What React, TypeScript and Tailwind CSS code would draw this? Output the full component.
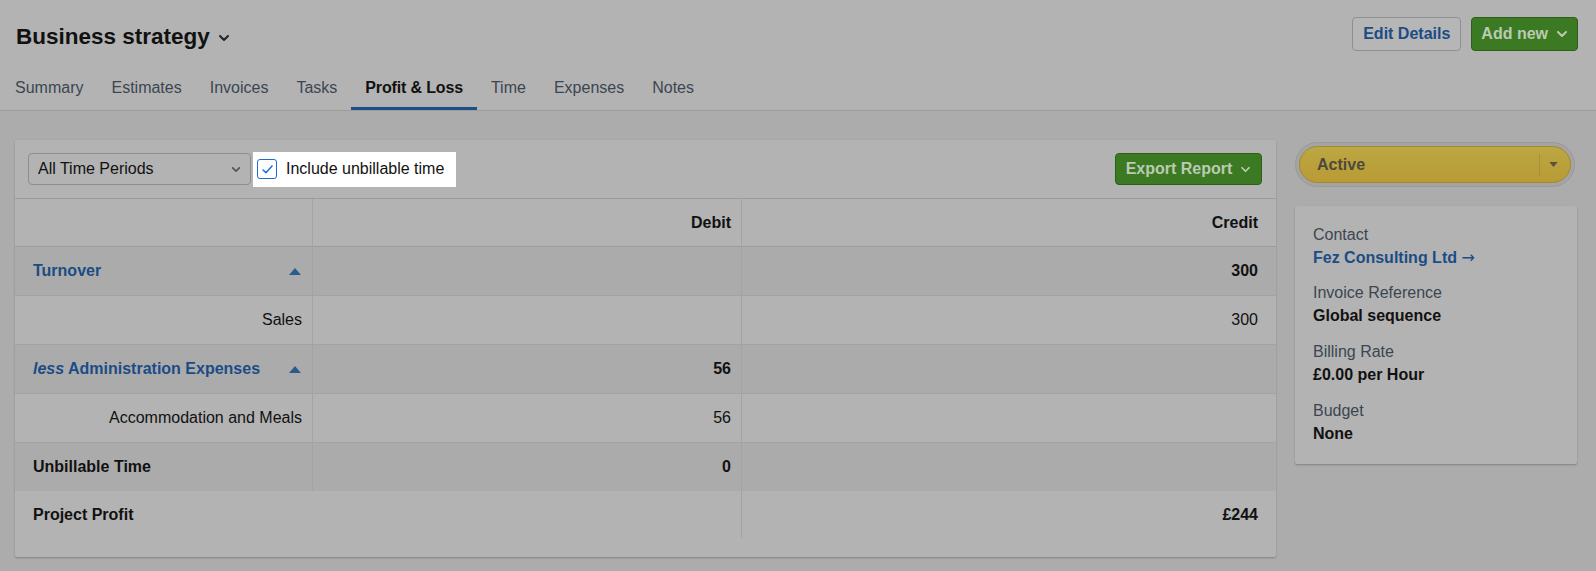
import React from "react";

const font = { fontFamily: '"Liberation Sans", Arial, sans-serif' };

function Chevron({ className = "" }: { className?: string }) {
  return (
    <svg viewBox="0 0 12 8" className={className} fill="none" stroke="currentColor" strokeWidth="2" strokeLinecap="round" strokeLinejoin="round">
      <path d="M2 2l4 4 4-4" />
    </svg>
  );
}

function Up() {
  return (
    <svg viewBox="0 0 12 8" className="w-[12px] h-[8px]" fill="#2a5c8e">
      <path d="M0 8L6 1l6 7z" />
    </svg>
  );
}

export default function App() {
  const tabs = ["Summary", "Estimates", "Invoices", "Tasks", "Profit & Loss", "Time", "Expenses", "Notes"];
  return (
    <div style={font} className="w-[1596px] h-[571px] bg-[#acacac] text-[#111] overflow-hidden">
      {/* header */}
      <div className="bg-[#b3b3b3] border-b border-[#9c9c9c] h-[111px] flex flex-col">
        <div className="flex items-start justify-between pl-[16px] pr-[18px] pt-[17px] h-[68px]">
          <div className="flex items-center gap-[8px] h-[38px] mt-[1px]">
            <span className="text-[22.5px] font-bold text-[#111]">Business strategy</span>
            <Chevron className="w-[12px] h-[8px] text-[#222] mt-[2px]" />
          </div>
          <div className="flex gap-[10px]">
            <button className="h-[34px] px-[10px] rounded-[4px] border border-[#8d9194] bg-[#b6b6b6] text-[#1c4c85] text-[16px] font-bold">Edit Details</button>
            <button className="h-[34px] px-[9px] rounded-[4px] border border-[#2d5e1a] bg-[#3b7a22] text-[#bccab4] text-[16px] font-bold flex items-center gap-[8px]">
              Add new <Chevron className="w-[12px] h-[8px]" />
            </button>
          </div>
        </div>
        <div className="flex items-end h-[42px] pl-[1px]">
          {tabs.map((t) => {
            const active = t === "Profit & Loss";
            return (
              <div
                key={t}
                className={
                  "h-[42px] flex items-start pt-[8px] text-[16px] px-[14px] " +
                  (active ? "font-bold text-[#111] border-b-[3px] border-[#1b4f87] tracking-[-0.15px]" : "text-[#3b4651]")
                }
              >
                {t}
              </div>
            );
          })}
        </div>
      </div>

      <div className="flex items-start pl-[15px] pt-[29px] gap-[19px]">
        {/* main card */}
        <div className="w-[1261px] h-[417px] bg-[#b3b3b3] rounded-[2px] shadow-[0_1px_2px_rgba(0,0,0,0.25)] flex flex-col">
          <div className="flex items-center justify-between h-[58px] pl-[13px] pr-[14px]">
            <div className="flex items-center gap-[2px]">
              <div className="w-[223px] h-[32px] rounded-[4px] border border-[#8e8e8e] bg-[#b3b3b3] flex items-center justify-between pl-[9px] pr-[9px] text-[16px] text-[#111]">
                <span>All Time Periods</span>
                <Chevron className="w-[10px] h-[7px] text-[#555]" />
              </div>
              <div className="bg-white h-[35px] w-[203px] flex items-center pl-[4px] gap-[9px]">
                <div className="w-[20px] h-[20px] rounded-[3px] border border-[#1a6fd1] flex items-center justify-center">
                  <svg viewBox="0 0 12 10" className="w-[11px] h-[9px]" fill="none" stroke="#1a6fd1" strokeWidth="1.6" strokeLinecap="round" strokeLinejoin="round">
                    <path d="M1 5.5l3.3 3L11 1" />
                  </svg>
                </div>
                <span className="text-[16px] text-[#111]">Include unbillable time</span>
              </div>
            </div>
            <button className="w-[147px] h-[32px] rounded-[4px] border border-[#2d5e1a] bg-[#3b7a22] text-[#bccab4] text-[16px] font-bold flex items-center justify-center gap-[8px]">
              Export Report <Chevron className="w-[11px] h-[7px]" />
            </button>
          </div>

          <div className="grid grid-cols-[298px_429px_1fr] border-t border-[#9c9c9c] text-[16px]">
            {/* header */}
            <div className="h-[48px] border-r border-[#a3a3a3] border-b border-b-[#9c9c9c]" />
            <div className="h-[48px] border-r border-[#a3a3a3] border-b border-b-[#9c9c9c] flex items-center justify-end pr-[10px] font-bold">Debit</div>
            <div className="h-[48px] border-b border-[#9c9c9c] flex items-center justify-end pr-[18px] font-bold">Credit</div>

            {/* Turnover */}
            <div className="h-[49px] bg-[#ababab] border-r border-[#a3a3a3] border-b border-b-[#a3a3a3] flex items-center justify-between pl-[18px] pr-[11px]">
              <span className="font-bold text-[#1c4c85]">Turnover</span>
              <Up />
            </div>
            <div className="h-[49px] bg-[#ababab] border-r border-[#a3a3a3] border-b border-b-[#a3a3a3]" />
            <div className="h-[49px] bg-[#ababab] border-b border-[#a3a3a3] flex items-center justify-end pr-[18px] font-bold">300</div>

            {/* Sales */}
            <div className="h-[49px] border-r border-[#a3a3a3] border-b border-b-[#a3a3a3] flex items-center justify-end pr-[10px]">Sales</div>
            <div className="h-[49px] border-r border-[#a3a3a3] border-b border-b-[#a3a3a3]" />
            <div className="h-[49px] border-b border-[#a3a3a3] flex items-center justify-end pr-[18px]">300</div>

            {/* less admin */}
            <div className="h-[49px] bg-[#ababab] border-r border-[#a3a3a3] border-b border-b-[#a3a3a3] flex items-center justify-between pl-[18px] pr-[11px]">
              <span className="font-bold text-[#1c4c85]"><span className="italic">less</span> Administration Expenses</span>
              <Up />
            </div>
            <div className="h-[49px] bg-[#ababab] border-r border-[#a3a3a3] border-b border-b-[#a3a3a3] flex items-center justify-end pr-[10px] font-bold">56</div>
            <div className="h-[49px] bg-[#ababab] border-b border-[#a3a3a3]" />

            {/* Accommodation */}
            <div className="h-[49px] border-r border-[#a3a3a3] border-b border-b-[#a3a3a3] flex items-center justify-end pr-[10px]">Accommodation and Meals</div>
            <div className="h-[49px] border-r border-[#a3a3a3] border-b border-b-[#a3a3a3] flex items-center justify-end pr-[10px]">56</div>
            <div className="h-[49px] border-b border-[#a3a3a3]" />

            {/* Unbillable */}
            <div className="h-[48px] bg-[#ababab] border-r border-[#a3a3a3] flex items-center pl-[18px] font-bold">Unbillable Time</div>
            <div className="h-[48px] bg-[#ababab] border-r border-[#a3a3a3] flex items-center justify-end pr-[10px] font-bold">0</div>
            <div className="h-[48px] bg-[#ababab]" />

            {/* Project Profit */}
            <div className="col-span-2 h-[47px] border-r border-[#a3a3a3] flex items-center pl-[18px] font-bold">Project Profit</div>
            <div className="h-[47px] flex items-center justify-end pr-[18px] font-bold">£244</div>
          </div>
        </div>

        {/* right column */}
        <div className="flex flex-col gap-[19px] pt-[2px] w-[282px]">
          <div className="h-[45px] w-[280px] rounded-full bg-[#a4a4a4] border border-[#9a9a9a] p-[3px]">
            <div className="h-full rounded-full bg-gradient-to-b from-[#bba743] to-[#b99b35] border border-[#a38a2c] flex items-center justify-between pl-[17px] pr-[12px]">
              <span className="text-[16px] font-bold text-[#4d4a3c]">Active</span>
              <div className="flex items-center gap-[9px]">
                <div className="w-px h-[22px] bg-[#a9913a]" />
                <svg viewBox="0 0 10 6" className="w-[9px] h-[5px]" fill="#5a5238"><path d="M0 0h10L5 6z" /></svg>
              </div>
            </div>
          </div>
          <div className="bg-[#b3b3b3] rounded-[2px] shadow-[0_1px_2px_rgba(0,0,0,0.25)] h-[258px] pl-[18px] pt-[19px] text-[16px]">
            <div className="text-[#3b4651] leading-[20px]">Contact</div>
            <div className="font-bold text-[#1c4c85] leading-[20px] mt-[3px]">
              Fez Consulting Ltd <span style={{ fontFamily: '"DejaVu Sans", sans-serif' }} className="font-normal">→</span>
            </div>
            <div className="text-[#3b4651] leading-[20px] mt-[15px]">Invoice Reference</div>
            <div className="font-bold leading-[20px] mt-[3px]">Global sequence</div>
            <div className="text-[#3b4651] leading-[20px] mt-[16px]">Billing Rate</div>
            <div className="font-bold leading-[20px] mt-[3px]">£0.00 per Hour</div>
            <div className="text-[#3b4651] leading-[20px] mt-[16px]">Budget</div>
            <div className="font-bold leading-[20px] mt-[3px]">None</div>
          </div>
        </div>
      </div>
    </div>
  );
}
